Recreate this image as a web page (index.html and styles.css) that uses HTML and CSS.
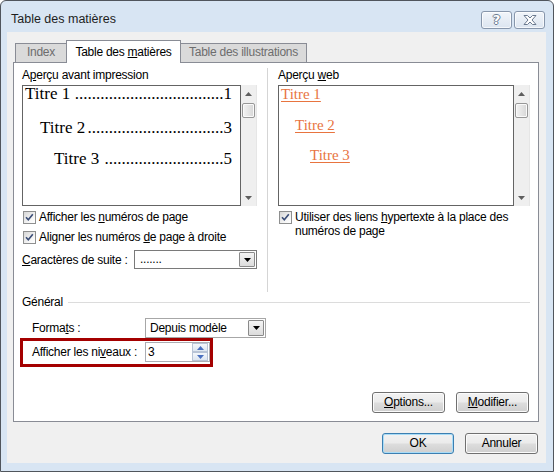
FILE: index.html
```html
<!DOCTYPE html>
<html lang="fr">
<head>
<meta charset="utf-8">
<title>Table des matières</title>
<link rel="stylesheet" href="styles.css">
</head>
<body>
<div class="window">
  <div class="titlebar">
    <span class="title">Table des matières</span>
    <div class="tb-buttons">
      <span class="tb-btn help">?</span>
      <span class="tb-btn close"><svg width="14" height="10" viewBox="0 0 14 10"><path d="M1 0.5h3.5l2.5 2.5 2.5-2.5h3.5l-4 4.5 4 4.5h-3.5l-2.5-2.5-2.5 2.5h-3.5l4-4.5z" fill="#fff" stroke="#6b7a8f" stroke-width="1"/></svg></span>
    </div>
  </div>
  <div class="client">
    <div class="tabs">
      <div class="tab t-index">Index</div>
      <div class="tab t-toc active">Table des <u>m</u>atières</div>
      <div class="tab t-ill">Table des illustrations</div>
    </div>
    <div class="panel">
      <div class="top">
        <div class="col left">
          <div class="label">A<u>p</u>erçu avant impression</div>
          <div class="preview">
            <div class="pbox">
              <div class="prow r1"><span>Titre 1 </span><span class="leader">...................................</span><span>1</span></div>
              <div class="prow r2"><span>Titre 2</span><span class="leader">................................</span><span>3</span></div>
              <div class="prow r3"><span>Titre 3 </span><span class="leader">............................</span><span>5</span></div>
            </div>
            <div class="vscroll">
              <div class="arrow"><svg width="7" height="4" viewBox="0 0 7 4"><path d="M0 4h7L3.5 0z" fill="#5e5e5e"/></svg></div>
              <div class="thumb"></div>
              <div class="track"></div>
              <div class="arrow"><svg width="7" height="4" viewBox="0 0 7 4"><path d="M0 0h7L3.5 4z" fill="#5e5e5e"/></svg></div>
            </div>
          </div>
          <div class="checks">
            <div class="check"><span class="cb"><svg width="11" height="11" viewBox="0 0 11 11"><path d="M2 5.2L4.3 7.8L8.8 2.2" fill="none" stroke="#3a4d77" stroke-width="1.6"/></svg></span><span>Afficher les <u>n</u>uméros de page</span></div>
            <div class="check"><span class="cb"><svg width="11" height="11" viewBox="0 0 11 11"><path d="M2 5.2L4.3 7.8L8.8 2.2" fill="none" stroke="#3a4d77" stroke-width="1.6"/></svg></span><span>Aligner les numéros <u>d</u>e page à droite</span></div>
          </div>
          <div class="field">
            <span><u>C</u>aractères de suite :</span>
            <div class="combo combo-suite"><span class="val">.......</span><span class="dd"><svg width="7" height="4" viewBox="0 0 7 4"><path d="M0 0h7L3.5 4z" fill="#000"/></svg></span></div>
          </div>
        </div>
        <div class="vsep"></div>
        <div class="col right">
          <div class="label">Aperçu <u>w</u>eb</div>
          <div class="preview">
            <div class="pbox wbox">
              <div class="wrow w1"><span class="link">Titre 1</span></div>
              <div class="wrow w2"><span class="link">Titre 2</span></div>
              <div class="wrow w3"><span class="link">Titre 3</span></div>
            </div>
            <div class="vscroll">
              <div class="arrow"><svg width="7" height="4" viewBox="0 0 7 4"><path d="M0 4h7L3.5 0z" fill="#5e5e5e"/></svg></div>
              <div class="thumb"></div>
              <div class="track"></div>
              <div class="arrow"><svg width="7" height="4" viewBox="0 0 7 4"><path d="M0 0h7L3.5 4z" fill="#5e5e5e"/></svg></div>
            </div>
          </div>
          <div class="check2"><span class="cb"><svg width="11" height="11" viewBox="0 0 11 11"><path d="M2 5.2L4.3 7.8L8.8 2.2" fill="none" stroke="#3a4d77" stroke-width="1.6"/></svg></span><span class="check2-text">Utiliser des liens <u>h</u>ypertexte à la place des<br>numéros de page</span></div>
        </div>
      </div>
      <div class="general-head"><span>Général</span><span class="hline"></span></div>
      <div class="frow">
        <span class="flabel">Forma<u>t</u>s :</span>
        <div class="combo combo-fmt"><span class="val">Depuis modèle</span><span class="dd"><svg width="7" height="4" viewBox="0 0 7 4"><path d="M0 0h7L3.5 4z" fill="#000"/></svg></span></div>
      </div>
      <div class="frow highlight">
        <span class="flabel">Afficher les ni<u>v</u>eaux :</span>
        <div class="spin"><span class="val">3</span><span class="spinbtns"><span class="sb"><svg width="7" height="4" viewBox="0 0 7 4"><path d="M0 4h7L3.5 0z" fill="#4a70c0"/></svg></span><span class="sb"><svg width="7" height="4" viewBox="0 0 7 4"><path d="M0 0h7L3.5 4z" fill="#4a70c0"/></svg></span></span></div>
      </div>
      <div class="actions">
        <span class="btn"><u>O</u>ptions...</span>
        <span class="btn"><u>M</u>odifier...</span>
      </div>
    </div>
    <div class="dlg-buttons">
      <span class="btn btn-ok">OK</span>
      <span class="btn">Annuler</span>
    </div>
  </div>
</div>
</body>
</html>
```
FILE: styles.css
```css
* { box-sizing: border-box; }
html, body { margin: 0; padding: 0; }
body {
  width: 554px;
  height: 472px;
  overflow: hidden;
  background: #ffffff;
  font-family: "Liberation Sans", Arial, sans-serif;
  font-size: 12px;
  letter-spacing: -0.25px;
  color: #000;
}
u { text-decoration: underline; text-underline-offset: 1px; }

.window {
  width: 554px;
  height: 472px;
  border: 1px solid #50555c;
  border-radius: 6px 6px 0 0;
  background: #d8e5f3;
  display: flex;
  flex-direction: column;
}
.titlebar {
  height: 31px;
  display: flex;
  align-items: flex-start;
  padding: 0 8px 0 10px;
  flex-shrink: 0;
}
.title {
  margin-top: 11px;
  line-height: 15px;
  font-size: 12.5px;
  letter-spacing: 0;
  color: #1e1e1e;
}
.tb-buttons {
  margin-left: auto;
  margin-top: 10px;
  display: flex;
  gap: 2px;
}
.tb-btn {
  width: 31px;
  height: 18px;
  border: 1px solid #8796ab;
  border-radius: 3px;
  background: linear-gradient(#f1f5fa, #dce5f0);
  box-shadow: inset 0 0 0 1px rgba(255,255,255,0.7);
  display: flex;
  align-items: center;
  justify-content: center;
}
.help {
  font-family: "DejaVu Sans", sans-serif;
  font-weight: bold;
  font-size: 13px;
  line-height: 14px;
  letter-spacing: 0;
  color: #ffffff;
  text-shadow: 1px 0 0 #6b7a8f, -1px 0 0 #6b7a8f, 0 1px 0 #6b7a8f, 0 -1px 0 #6b7a8f;
}

.client {
  flex: 1;
  margin: 0 7px 8px 6px;
  background: #f0f0f0;
  padding: 8px 7px 0 6px;
  display: flex;
  flex-direction: column;
}
.tabs {
  display: flex;
  align-items: flex-end;
  height: 23px;
  margin: 0 0 -1px 2px;
  position: relative;
  z-index: 1;
}
.tab {
  height: 19px;
  margin-bottom: 1px;
  border: 1px solid #898c95;
  border-bottom: none;
  background: #dadada;
  color: #6d6d6d;
  text-align: center;
  padding-top: 1px;
  line-height: 15px;
  white-space: nowrap;
}
.t-index { width: 52px; }
.t-toc { width: 115px; margin-left: -1px; }
.t-ill { width: 127px; margin-left: -1px; }
.tab.active {
  height: 23px;
  margin-bottom: 0;
  background: #ffffff;
  color: #000;
  padding-top: 4px;
}

.panel {
  height: 360px;
  border: 1px solid #898c95;
  background: #ffffff;
  padding: 5px 8px 8px 8px;
  display: flex;
  flex-direction: column;
}
.top {
  display: flex;
  height: 224px;
}
.col.left { width: 235px; }
.col.right { flex: 1; }
.vsep {
  width: 1px;
  background: #d5d5d5;
  margin: 0 10px;
}
.label {
  line-height: 15px;
  margin-bottom: 2px;
  white-space: nowrap;
}
.preview {
  display: flex;
  height: 121px;
}
.pbox {
  width: 219px;
  border: 1px solid #646464;
  background: #ffffff;
  font-family: "Liberation Serif", "Times New Roman", serif;
  font-size: 17px;
  letter-spacing: 0;
  overflow: hidden;
}
.wbox { width: 236px; font-size: 15px; }
.prow {
  display: flex;
  line-height: 17px;
  padding-right: 8px;
  white-space: pre;
}
.r1 { padding-left: 2px; margin-top: -1px; }
.r2 { padding-left: 17px; margin-top: 17px; }
.r3 { padding-left: 31px; margin-top: 14px; }
.leader {
  flex: 1;
  text-align: right;
}
.wrow { line-height: 17px; white-space: nowrap; }
.w1 { padding-left: 2px; }
.w2 { padding-left: 16px; margin-top: 14px; }
.w3 { padding-left: 31px; margin-top: 13px; }
.link {
  color: #e8743f;
  text-decoration: underline;
  text-decoration-thickness: 1px;
  text-underline-offset: 2px;
}
.vscroll {
  width: 16px;
  background: #efefef;
  border-right: 1px solid #e6e6e6;
  display: flex;
  flex-direction: column;
  align-items: center;
}
.arrow {
  height: 17px;
  display: flex;
  align-items: center;
  justify-content: center;
  width: 100%;
}
.thumb {
  width: 13px;
  height: 15px;
  margin-top: 1px;
  border: 1px solid #979797;
  border-radius: 2px;
  background: linear-gradient(90deg, #f3f3f3, #e2e2e2 60%, #d6d6d6);
  box-shadow: inset 0 0 0 1px #fafafa;
}
.track { flex: 1; }

.checks { margin-top: 1px; }
.check {
  display: flex;
  align-items: center;
  height: 20px;
  line-height: 20px;
  white-space: nowrap;
}
.cb {
  width: 13px;
  height: 13px;
  flex-shrink: 0;
  margin-left: 1px;
  margin-right: 3px;
  border: 1px solid #8e8f8f;
  background: linear-gradient(135deg, #d6d6d6, #f7f7f7 70%, #ffffff);
  display: flex;
}
.check2 {
  display: flex;
  align-items: flex-start;
  margin-top: 4px;
  line-height: 14px;
}
.check2 .cb { margin-top: 1px; }

.field {
  display: flex;
  align-items: center;
  height: 19px;
  margin-top: 3px;
  white-space: nowrap;
}
.combo {
  display: flex;
  background: #ffffff;
  border: 1px solid #7a7a7a;
}
.combo .val {
  flex: 1;
  padding-left: 5px;
}
.combo .dd {
  width: 16px;
  margin: 1px;
  border: 1px solid #8a8a8a;
  border-radius: 1px;
  background: linear-gradient(#f4f4f4, #dcdcdc);
  display: flex;
  align-items: center;
  justify-content: center;
}
.combo-suite {
  margin-left: auto;
  width: 123px;
  height: 19px;
  line-height: 17px;
}
.combo-fmt {
  width: 121px;
  height: 20px;
  line-height: 18px;
  border-color: #a7a7a7;
}
.combo-fmt .val { padding-left: 4px; }

.general-head {
  display: flex;
  align-items: center;
  line-height: 15px;
  margin-top: 3px;
}
.hline {
  flex: 1;
  height: 1px;
  background: #dcdcdc;
  margin-left: 5px;
}
.frow {
  display: flex;
  align-items: center;
  height: 20px;
  margin-top: 8px;
  padding-left: 10px;
  white-space: nowrap;
}
.flabel { width: 113px; }
.frow.highlight {
  margin-top: 0;
  margin-left: -2px;
  width: 193px;
  height: 29px;
  border: 3px solid #a40000;
  padding: 1px 0 2px 9px;
}
.spin {
  width: 65px;
  height: 20px;
  border: 1px solid #abadb3;
  background: #ffffff;
  display: flex;
  line-height: 18px;
}
.spin .val { flex: 1; padding-left: 2px; }
.spinbtns {
  width: 16px;
  margin: 0 1px 0 0;
  display: flex;
  flex-direction: column;
}
.sb {
  flex: 1;
  border: 1px solid #b8c4d6;
  background: linear-gradient(#f4f7fb, #dde6f1);
  display: flex;
  align-items: center;
  justify-content: center;
}

.actions {
  margin-top: auto;
  display: flex;
  justify-content: flex-end;
  gap: 11px;
  padding-right: 1px;
}
.btn {
  width: 73px;
  height: 21px;
  border: 1px solid #707070;
  border-radius: 3px;
  background: linear-gradient(#f2f2f2 0%, #ebebeb 48%, #dddddd 52%, #cfcfcf 100%);
  box-shadow: inset 0 0 0 1px #fbfbfb;
  text-align: center;
  line-height: 19px;
  white-space: nowrap;
}
.dlg-buttons {
  display: flex;
  justify-content: flex-end;
  gap: 11px;
  margin-top: 11px;
  padding-right: 1px;
}
.btn-ok {
  width: 72px;
  border-color: #3c7fb1;
  box-shadow: inset 0 0 0 1px #a9dcf7;
}
```
